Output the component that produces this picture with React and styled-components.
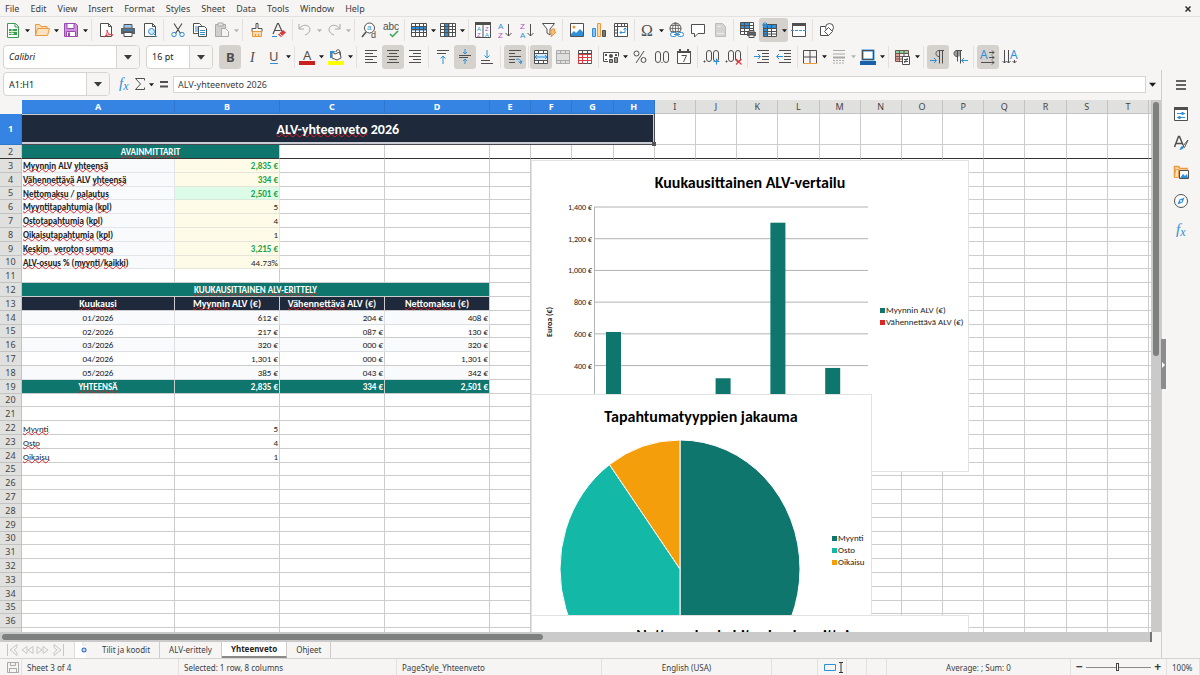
import React, { useState } from 'react';
import styled, { createGlobalStyle, css, ThemeProvider } from 'styled-components';

const theme = {
  bg: '#f6f5f4',
  line: '#d6d3d0',
  grid: '#cccccc',
  header: '#e0e0de',
  accent: '#3584e4',
  pressed: '#d5d1cd',
  text: '#3a3d3f',
  teal: '#0f766e',
  navy: '#1e293b',
  ui: "'Noto Sans', 'Open Sans', sans-serif",
  cell: "Carlito, Lato, 'Open Sans', sans-serif",
};

const GlobalStyle = createGlobalStyle`
  * {
    box-sizing: border-box;
  }
  body {
    margin: 0;
    background: ${theme.bg};
    color: ${theme.text};
    font-family: ${theme.ui};
    font-size: 9px;
  }
  button,
  input {
    font: inherit;
    color: inherit;
  }
  button {
    border: 0;
    padding: 0;
    background: none;
  }
`;

/* ---------- icons ---------- */

const K = '#4f4f4f';
const B = '#2f8fd8';
const O = '#ea9a3e';
const R = '#e0393e';
const G = '#a9a9a9';
const P = '#b04fc4';

const T = ({ x, y, size = 8, fill = K, ...rest }) => (
  <text x={x} y={y} fontSize={size} fill={fill} stroke="none" fontFamily="'Noto Sans', sans-serif" {...rest} />
);

const Letter = props => <T fontFamily="'Liberation Sans', sans-serif" {...props} />;

const Grid = ({ color = K }) => (
  <path d="M.5 1.5h15v13H.5zM.5 4.5h15M.5 7.5h15M.5 10.5h15M4.5 1.5v13M8.5 1.5v13M12.5 1.5v13" stroke={color} fill="none" />
);

const Lines = ({ d, ...rest }) => <path d={d} stroke={K} {...rest} />;

const icons = {
  newDoc: (
    <>
      <path d="M2.5 1.5h8l3 3v11h-11z" fill="#fff" stroke="#3a9c4e" />
      <path d="M10 1.5v3.500h3.500" stroke="#3a9c4e" />
      <path d="M4 7h8v6H4z" fill="#3a9c4e" />
      <path d="M4 9.500h8M4 11.500h5M7 7v6" stroke="#d8f0da" />
    </>
  ),
  open: (
    <>
      <path d="M1.500 13.500v-11h4l1.500 2h6v3" fill="#fbdcae" stroke={O} />
      <path d="M1.500 13.500l2-7h12l-2 7z" fill="#fce3bd" stroke={O} />
    </>
  ),
  save: (
    <>
      <path d="M1.500 1.500h11l2 2v11h-13z" fill="#cf92dc" stroke="#9a4ab0" />
      <path d="M4 1.500h7v5H4zM3.500 9.500h9v5h-9z" fill="#fff" stroke="#9a4ab0" />
      <path d="M5 10.500v3.500h2v-3.500z" fill="#9a4ab0" />
    </>
  ),
  pdf: (
    <>
      <path d="M2.500 1.500h8l3 3v10h-11z" fill="#fff" stroke={K} />
      <path d="M10.500 1.500v3h3" stroke={K} />
      <path d="M6 15c2-1 4-5 3-7 0 3 3 5 6 5-3-1-7 0-9 2z" stroke={R} fill="#fff" />
    </>
  ),
  print: (
    <>
      <path d="M4 2.500h8V6H4z" fill="#fff" stroke={K} />
      <path d="M1 6h14v6H1z" fill="#5c6266" />
      <path d="M4 4h8M3 8h10" stroke={B} />
      <path d="M4 10.500h8v4H4z" fill="#fff" stroke={K} />
    </>
  ),
  preview: (
    <>
      <path d="M2.500 1.500h8l3 3v10h-11z" fill="#fff" stroke={K} />
      <path d="M10.500 1.500v3h3" stroke={K} />
      <circle cx="9.500" cy="9.500" r="3" fill="#d5eafa" stroke={B} />
      <path d="M12 12l3 3" stroke={B} />
    </>
  ),
  cut: (
    <>
      <path d="M4 1.500l6.500 10M12 1.500l-6.500 10" stroke={K} strokeWidth="1.200" />
      <circle cx="4" cy="12.500" r="2.200" stroke={B} />
      <circle cx="12" cy="12.500" r="2.200" stroke={B} />
    </>
  ),
  copy: (
    <>
      <path d="M1.500 1.500h6l2 2v8h-8z" fill="#fff" stroke={K} />
      <path d="M3 5h5M3 7h5M3 9h5" stroke={B} />
      <path d="M6.500 4.500h6l2 2v8h-8z" fill="#fff" stroke={K} />
      <path d="M8 8.500h5M8 10.500h5M8 12.500h5" stroke={B} />
    </>
  ),
  paste: (
    <>
      <path d="M1.500 2.500h10v12h-10z" fill="#cfcfcf" stroke={G} />
      <path d="M4 1h5v3H4z" fill="#e8e8e8" stroke={G} />
      <path d="M7.500 6.500h4l3 3v5h-7z" fill="#f4f4f4" stroke={G} />
    </>
  ),
  clone: (
    <>
      <path d="M7 1.500h2v5h4v3H3v-3h4z" fill="#fff" stroke={K} />
      <path d="M3.500 9.500h9v5h-9z" fill="#fbdcae" stroke={O} />
      <path d="M6.500 12v3M9.500 12v3" stroke={O} />
    </>
  ),
  clear: (
    <>
      <path d="M2 12L6.500 1.500h1L11 9.500M3.500 8.500h6" stroke={K} strokeWidth="1.200" />
      <path d="M1 14.500h5" stroke={B} />
      <path d="M7 12.500l5-4.500 3 2.500-5 4.500z" fill={R} />
      <path d="M8.500 11.500l2.500 2.500" stroke="#fff" />
    </>
  ),
  undo: <path d="M2 2v5h5M2 7c3-5 10-5 11 0 0 3-2 5-5 6" stroke={G} />,
  redo: <path d="M14 2v5H9M14 7C11 2 4 2 3 7c0 3 2 5 5 6" stroke={G} />,
  find: (
    <>
      <circle cx="8.500" cy="6" r="5" fill="#fff" stroke={K} />
      <path d="M5 10l-4 5" stroke={K} strokeWidth="1.500" />
      <Letter x="6" y="8" size="8" fill={B}>a</Letter>
      <Letter x="10" y="16" size="9">d</Letter>
    </>
  ),
  spell: (
    <>
      <Letter x="0" y="8" size="10">abc</Letter>
      <path d="M7 12l2.500 2.500L15 9" stroke="#35a852" strokeWidth="1.500" />
    </>
  ),
  row: (
    <>
      <path d="M1 2h14v12H1z" fill="#fff" />
      <path d="M0 4.500h16v4H0z" fill={B} />
      <Grid />
    </>
  ),
  column: (
    <>
      <path d="M1 2h14v12H1z" fill="#fff" />
      <path d="M4.500 1h5v14h-5z" fill={B} />
      <Grid />
    </>
  ),
  sort: (
    <>
      <path d="M.5.5h15v15H.5z" fill="#fff" stroke={K} />
      <path d="M0 0h16v3H0zM7.500 3h1v13h-1z" fill={K} />
      <Letter x="2" y="8.500" size="6" fill={B}>A</Letter>
      <Letter x="2" y="15" size="6" fill={P}>Z</Letter>
      <Letter x="10" y="8.500" size="6" fill={P}>Z</Letter>
      <Letter x="10" y="15" size="6" fill={B}>A</Letter>
    </>
  ),
  sortAsc: (
    <>
      <Letter x="1" y="7" size="8" fill={B}>A</Letter>
      <Letter x="1" y="16" size="8" fill={P}>Z</Letter>
      <path d="M11.500 2v12M8.500 11l3 3 3-3" stroke={K} />
    </>
  ),
  sortDesc: (
    <>
      <Letter x="1" y="7" size="8" fill={P}>Z</Letter>
      <Letter x="1" y="16" size="8" fill={B}>A</Letter>
      <path d="M11.500 2v12M8.500 11l3 3 3-3" stroke={K} />
    </>
  ),
  filter: (
    <>
      <path d="M1.500 1.500h12l-4.500 5.500v6l-3-2V7z" fill="#fff" stroke={K} />
      <path d="M11 7h3l-1 3h2l-5 5 1-4H9z" fill="#f8c27d" stroke={O} />
    </>
  ),
  image: (
    <>
      <path d="M1.500 1.500h13v13h-13z" fill="#fff" stroke={K} />
      <circle cx="5" cy="5" r="1.500" fill={O} />
      <path d="M2 14v-2l3-3 2 2 4-4 3 3v4z" fill={B} />
    </>
  ),
  chart: (
    <>
      <path d="M1.500 6.500h3v8h-3z" fill="#8fc4ee" stroke={B} />
      <path d="M6.500 1.500h3v13h-3z" fill="#fbdcae" stroke={O} />
      <path d="M11.500 8.500h3v6h-3z" fill="#777" stroke={K} />
    </>
  ),
  pivot: (
    <>
      <path d="M1.500 1.500h13v13h-13z" fill="#fff" stroke={K} />
      <path d="M1.500 4.500h13M4.500 1.500v13M8.500 1.500v3M11.500 1.500v3M1.500 8h3M1.500 11h3" stroke={K} />
      <path d="M12 6v4.500H7M10.500 7.500L12 6l1.500 1.500M8.500 9L7 10.500 8.500 12" stroke={B} />
    </>
  ),
  omega: <T x="2" y="14" size="16" fontFamily="'Liberation Serif', serif">Ω</T>,
  link: (
    <>
      <circle cx="7.500" cy="6.500" r="5.500" stroke={K} />
      <path d="M2 6.500h11M7.500 1v11M3 3.500h9M3 9.500h9M7.500 1c-4 3-4 8 0 11M7.500 1c4 3 4 8 0 11" stroke={K} strokeWidth=".7" />
      <rect x="2.500" y="10.500" width="6" height="4" rx="2" fill="#fff" stroke={B} />
      <rect x="9.500" y="10.500" width="6" height="4" rx="2" fill="#fff" stroke={B} />
      <path d="M6 12.500h6" stroke={B} />
    </>
  ),
  comment: <path d="M1.500 2.500h13v9H8l-3.500 3.500v-3.500h-3z" fill="#fff" stroke={K} />,
  headerFooter: (
    <>
      <path d="M3.500 1.500h7l3 3v10h-10z" fill="#d3d3d3" stroke="#bdbdbd" />
      <path d="M5 11.500h7M5 4.500h4" stroke="#eee" />
    </>
  ),
  printArea: (
    <>
      <path d="M1 1h13v12H1z" fill="#fff" />
      <path d="M1 1h9v6H1z" fill={B} />
      <path d="M.5.5h13v12H.5zM.5 3.500h13M.5 6.500h13M.5 9.500h13M4.500.5v12M9.500.5v12" stroke={K} />
      <path d="M7 10h9v4H7z" fill="#5c6266" />
      <path d="M9 8.500h5V10H9zM9 13h5v2.500H9z" fill="#fff" stroke={K} />
    </>
  ),
  freeze: (
    <>
      <path d="M2 2h13v13H2z" fill="#fff" />
      <path d="M2 2h13v4H2zM2 2h4v13H2z" fill={B} />
      <path d="M1.500 2.500h13v12h-13zM1.500 6.500h13M1.500 9.500h13M1.500 12h13M5.500 2.500v12M9.500 2.500v12" stroke={K} />
      <path d="M3 0v6M0 3h6M1 1l4 4M5 1L1 5" stroke={B} />
    </>
  ),
  split: (
    <>
      <path d="M1.500 1.500h13v13h-13z" fill="#fff" stroke={K} />
      <path d="M1 1h14v3H1z" fill={K} />
      <path d="M0 8.500h16" stroke={B} strokeDasharray="3 1" />
    </>
  ),
  shapes: (
    <>
      <path d="M1.500 4.500h8v9h-8z" fill="#fff" stroke={K} />
      <circle cx="10.500" cy="5.500" r="4" fill="#fff" stroke={K} />
      <path d="M9.500 5.500l4 4-4 4-4-4z" fill="#fff" stroke={K} />
    </>
  ),
  bold: <T x="4" y="13" size="13" fontWeight="700">B</T>,
  italic: <T x="6" y="13" size="14" fontStyle="italic" fontFamily="'Liberation Serif', serif">I</T>,
  underline: (
    <>
      <T x="3" y="12" size="13">U</T>
      <path d="M4 14.500h8" stroke={B} />
    </>
  ),
  fontColor: (
    <>
      <T x="4" y="10.500" size="13">A</T>
      <path d="M0 12h16v4H0z" fill="#c9211e" />
    </>
  ),
  highlight: (
    <>
      <path d="M4 9V3l3 2 5-2 1 6-4 2z" fill="#fff" stroke={K} />
      <path d="M2 2h5l-1 2H4v5H2z" fill={B} />
      <path d="M8 3c0-3 4-3 4 0v3" stroke={K} />
      <path d="M0 12h16v4H0z" fill="#ffff00" />
    </>
  ),
  alignLeft: <Lines d="M2 1.500h12M2 4.500h8M2 7.500h12M2 10.500h8M2 13.500h12" />,
  alignCenter: <Lines d="M2 1.500h12M4 4.500h8M2 7.500h12M4 10.500h8M2 13.500h12" />,
  alignRight: <Lines d="M2 1.500h12M6 4.500h8M2 7.500h12M6 10.500h8M2 13.500h12" />,
  alignTop: (
    <>
      <Lines d="M2 1.500h12M2 4.500h9" />
      <path d="M8 15V7M5.500 9.500L8 7l2.500 2.500" stroke={B} />
    </>
  ),
  alignMiddle: (
    <>
      <Lines d="M2 6.500h12M2 8.500h9" />
      <path d="M8 0v5M6 3l2 2 2-2M8 15v-5M6 12l2-2 2 2" stroke={B} />
    </>
  ),
  alignBottom: (
    <>
      <Lines d="M2 11.500h9M2 14.500h12" />
      <path d="M8 1v8M5.500 6.500L8 9l2.500-2.500" stroke={B} />
    </>
  ),
  wrap: (
    <>
      <Lines d="M2 1.500h12M2 4.500h6M2 7.500h12M2 10.500h6M2 13.500h6" />
      <path d="M9 10.500c3-1 5 0 5 4M11.500 12.500l2.500 2 1-3" stroke={B} />
    </>
  ),
  merge: (
    <>
      <path d="M1.500 1.500h13v13h-13z" fill="#fff" stroke={K} />
      <path d="M1.500 4.500h13M1.500 11.500h13M5.500 1.500v3M10.500 1.500v3M5.500 11.500v3M10.500 11.500v3" stroke={K} />
      <path d="M2 5h12v6H2z" fill="#d5eafa" />
      <path d="M2 8h12M4 6L2 8l2 2M12 6l2 2-2 2" stroke={B} />
    </>
  ),
  mergeOff: (
    <>
      <path d="M1.500 1.500h13v13h-13z" fill="#dedede" stroke={G} />
      <path d="M1.500 4.500h13M1.500 11.500h13M5.500 1.500v3M10.500 1.500v3M5.500 11.500v3M10.500 11.500v3" stroke={G} />
    </>
  ),
  unmerge: (
    <>
      <path d="M1.500 1.500h13v13h-13z" fill="#fff" stroke={K} />
      <path d="M5.500 1.500v3M10.500 1.500v3M1.500 4.500h13" stroke={K} />
      <path d="M1.500 5.500h13M1.500 11.500h13M5.500 5v10M10.500 5v10M1.500 8.500h13M1.500 5v10M14.500 5v10" stroke={R} />
    </>
  ),
  currency: (
    <>
      <path d="M5 12.500H.5v-9h15v4" fill="#fff" stroke={K} />
      <path d="M2 5h2v2H2zM12 5h2v2h-2zM2 10h2v1H2z" fill={K} />
      <circle cx="8" cy="7" r="2" fill={K} />
      <path d="M6.500 10.500h3v3h-3zM11.500 8.500h3v5h-3z" fill="#999" stroke={K} />
    </>
  ),
  percent: (
    <>
      <circle cx="4.500" cy="4.500" r="2.500" stroke={K} />
      <circle cx="11.500" cy="11" r="2.500" stroke={K} />
      <path d="M12 2L4 14" stroke={K} />
    </>
  ),
  decimals: (
    <>
      <rect x="1.500" y="2.500" width="5" height="11" rx="2.500" stroke={K} />
      <rect x="9.500" y="2.500" width="5" height="11" rx="2.500" stroke={K} />
      <path d="M7.500 13h1v1h-1z" fill={K} />
    </>
  ),
  date: (
    <>
      <path d="M1.500 2.500h13v12h-13z" fill="#fff" stroke={K} />
      <path d="M1 2h14v2H1zM3 0h2v3H3zM11 0h2v3h-2z" fill={K} />
      <path d="M5.500 6.500h5l-3 6.500" stroke={K} />
    </>
  ),
  addDecimal: (
    <>
      <rect x="2.500" y="1.500" width="5" height="11" rx="2.500" stroke={K} />
      <rect x="9.500" y="1.500" width="5" height="11" rx="2.500" stroke={K} />
      <path d="M0 12h1v1H0z" fill={K} stroke={K} />
      <path d="M12.500 9.500v6M9.500 12.500h6" stroke={B} strokeWidth="1.200" />
    </>
  ),
  removeDecimal: (
    <>
      <rect x="2.500" y="1.500" width="5" height="11" rx="2.500" stroke={K} />
      <rect x="9.500" y="1.500" width="5" height="11" rx="2.500" stroke={K} />
      <path d="M0 12h1v1H0z" fill={K} stroke={K} />
      <path d="M10 10l5.500 5.500M15.500 10L10 15.500" stroke={R} strokeWidth="1.200" />
    </>
  ),
  indent: (
    <>
      <Lines d="M3 1.500h12M8 4.500h7M8 7.500h7M8 10.500h7M3 13.500h12" />
      <path d="M0 7.500h6M4 5l2.500 2.500L4 10" stroke={B} />
    </>
  ),
  outdent: (
    <>
      <Lines d="M3 1.500h12M8 4.500h7M8 7.500h7M8 10.500h7M3 13.500h12" />
      <path d="M1 7.500h6M3 5L.5 7.500 3 10" stroke={B} />
    </>
  ),
  borders: (
    <>
      <path d="M14.500 14.500v-13h-13v13M1.500 8h13M8 1.500v13" stroke={K} />
      <path d="M1 14.500h14" stroke={O} />
    </>
  ),
  borderStyle: (
    <>
      <path d="M2 1.500h12M2 5h12" stroke={G} />
      <path d="M2 8.500h12" stroke={G} strokeWidth="2" />
      <path d="M2 11.500h12M2 14h12" stroke={G} strokeDasharray="2 1" />
    </>
  ),
  borderColor: (
    <>
      <path d="M2.500 1.500h11v9h-11z" fill="#fff" stroke={B} strokeWidth="2" />
      <path d="M2.500 1.500h11v9h-11z" stroke={K} />
      <path d="M0 12h16v4H0z" fill="#1b5fa8" />
    </>
  ),
  conditional: (
    <>
      <path d="M1 1h12v3H1z" fill="#8fd19e" />
      <path d="M1 4h4v9H1z" fill="#f09a9a" />
      <path d="M.5 1.500h13v11H.5zM.5 4.500h13M.5 7.500h13M.5 10h13M4.500 1.500v11M9 1.500v11" stroke="#6b5a50" />
      <path d="M7.500 7.500h7v8h-7z" fill="#fff" stroke={K} />
      <path d="M9 10.500h4M9 12.500h4M12.500 9l-3 5" stroke={K} />
    </>
  ),
  ltr: (
    <>
      <path d="M14 1.500H9c-4 0-4 6 0 6M9.500 1.500v13M12.500 1.500v13" stroke={K} />
      <path d="M0 11.500h6M4 9l2.500 2.500L4 14" stroke={B} />
    </>
  ),
  rtl: (
    <>
      <path d="M8 1.500H5c-4 0-4 6 0 6h3z" fill="#999" />
      <path d="M10 1.500H5c-4 0-4 6 0 6M5.500 1.500v11M8.500 1.500v13" stroke={K} />
      <path d="M10 11.500h6M12 9l-2.500 2.500L12 14" stroke={B} />
    </>
  ),
  textHorizontal: (
    <>
      <T x="0" y="10" size="12" fill={B}>A</T>
      <path d="M9 3.500h5M9 8.500h5M1 13.500h13M12 1.500l2 2-2 2M12 6.500l2 2-2 2M12 11.500l2 2-2 2" stroke={K} />
    </>
  ),
  textVertical: (
    <>
      <T x="8" y="10" size="12" fill={B}>A</T>
      <path d="M2.500 1v13M6.500 1v13M12.500 11v3M.5 12l2 2 2-2M4.500 12l2 2 2-2M10.500 12l2 2 2-2" stroke={K} />
    </>
  ),
  fx: (
    <T x="3" y="12" size="15" fill={B} fontStyle="italic" fontFamily="'Liberation Serif', serif">
      f<tspan fontSize="12" dy="2">x</tspan>
    </T>
  ),
  sum: <path d="M12.500 4.500v-2h-9L8.500 8l-5 5.500h9v-2" stroke={K} />,
  equals: <path d="M5 6h8M5 10.500h8" stroke={K} strokeWidth="2" />,
  menu: <path d="M3 4h10M3 8h10M3 12h10" stroke="#333" strokeWidth="1.500" />,
  properties: (
    <>
      <path d="M1.500 1.500h13v13h-13z" fill="#fff" stroke={K} />
      <path d="M1 1h14v3H1z" fill={K} />
      <path d="M4 7.500h8M4 11.500h8" stroke={B} />
      <path d="M9.500 6v3M6.500 10v3" stroke={B} strokeWidth="2" />
    </>
  ),
  styles: (
    <>
      <path d="M1.500 12L5.500 1.500h1L10 10M3 8.500h6" stroke={K} strokeWidth="1.500" />
      <path d="M15 5l-5 6 1.500 1.500z" fill="#fff" stroke={K} />
      <path d="M5 15c3 0 2-4 4.500-4 2.500 0 2 4-4.500 4z" fill={B} />
    </>
  ),
  gallery: (
    <>
      <path d="M1.500 13.500v-11h4l1.500 2h7v2" fill="#fbdcae" stroke={O} strokeWidth="1.500" />
      <path d="M1.500 13.500l1-8h3v8z" fill="#fce3bd" stroke={O} />
      <path d="M6.500 6.500h9v8h-9z" fill="#fff" stroke={K} />
      <path d="M7 14l3-4 2 2 2-2 1 4z" fill={B} />
    </>
  ),
  navigator: (
    <>
      <circle cx="8" cy="8" r="6.500" fill="#fff" stroke={K} />
      <path d="M11.500 4.500l-2 5-5 2 2-5z" fill={B} />
      <circle cx="8" cy="8" r="1" fill="#fff" />
    </>
  ),
  saved: (
    <path d="M2.500 3.500h11v10h-11zM5.500 3.500v3h5v-3M4.500 13.500v-4h7v4" stroke={G} />
  ),
  addSheet: (
    <>
      <path d="M1 0h9l3 3v13H1z" fill="#fff" />
      <path d="M1.500 0v16M10 0v3h3" stroke="#ddd" />
      <circle cx="11" cy="8" r="2.500" fill="#2a6fc0" />
      <path d="M11 6.500v3M9.500 8h3" stroke="#fff" />
    </>
  ),
};

const IconSvg = styled.svg`
  flex: none;
  overflow: visible;
`;

const Icon = ({ name }) => (
  <IconSvg width="16" height="16" viewBox="0 0 16 16" fill="none" aria-hidden="true">
    {icons[name]}
  </IconSvg>
);

const Triangle = ({ size = 6 }) => (
  <svg width={size} height={size} viewBox="0 0 6 6" aria-hidden="true">
    <path d="M0 1.500h6L3 5z" fill="currentColor" />
  </svg>
);

/* ---------- window chrome ---------- */

const Window = styled.div`
  display: flex;
  flex-direction: column;
  height: 100vh;
  overflow: hidden;
`;

const MenuBar = styled.nav`
  display: flex;
  align-items: center;
  gap: 1px;
  height: 17px;
  padding-right: 6px;
  border-bottom: 1px solid #e4e2e0;
`;

const MenuItem = styled.button`
  padding: 1px 5px 0;
  line-height: 15px;
`;

const CloseButton = styled.button`
  margin-left: auto;
  width: 12px;
  height: 12px;
  color: #2c2c2c;
`;

const Toolbar = styled.div`
  display: flex;
  align-items: center;
  height: ${({ $height }) => $height}px;
  padding-left: ${({ $inset }) => $inset}px;
`;

const ToolGroup = styled.div`
  display: flex;
  border-radius: 3px;
  ${({ $pressed, theme }) =>
    $pressed &&
    css`
      background: ${theme.pressed};
    `}
`;

const ToolButton = styled.button`
  display: flex;
  align-items: center;
  justify-content: center;
  width: 22px;
  height: 24px;
`;

const ArrowButton = styled.button`
  display: flex;
  align-items: center;
  justify-content: center;
  width: 7px;
  height: 24px;
  color: ${({ disabled }) => (disabled ? '#b4b4b4' : '#1d1d1d')};
`;

const Separator = styled.span`
  width: 1px;
  height: 22px;
  margin: 0 ${({ $tight }) => ($tight ? 1 : 3)}px 0 2px;
  background: #e3e0de;
`;

const Combo = styled.div`
  display: flex;
  flex: none;
  width: ${({ $width }) => $width}px;
  height: 24px;
  margin-right: 6px;
  border: 1px solid ${({ theme }) => theme.line};
  border-radius: 4px;
  background: #fff;
  overflow: hidden;
`;

const ComboInput = styled.input`
  flex: 1;
  min-width: 0;
  padding: 0 5px;
  border: 0;
  background: none;
  font-size: 9px;
  font-style: ${({ $italic }) => ($italic ? 'italic' : 'normal')};
  color: #222;
`;

const ComboArrow = styled.button`
  display: flex;
  align-items: center;
  justify-content: center;
  width: 23px;
  border-left: 1px solid ${({ theme }) => theme.line};
  background: ${({ theme }) => theme.bg};
`;

const Main = styled.div`
  display: flex;
  flex: 1;
  min-height: 0;
`;

const Workspace = styled.main`
  display: flex;
  flex-direction: column;
  flex: 1;
  min-width: 0;
`;

const FormulaBar = styled.div`
  display: flex;
  align-items: center;
  height: 30px;
  padding: 0 5px 2px 3px;
`;

const FormulaButton = styled.button`
  display: flex;
  width: 16px;
  height: 16px;
`;

const FormulaInput = styled.input`
  flex: 1;
  min-width: 0;
  height: 17px;
  margin: 0 3px 0 2px;
  padding: 0 4px;
  border: 1px solid ${({ theme }) => theme.line};
  background: #fff;
  font-size: 9px;
`;

const SideBar = styled.aside`
  position: relative;
  display: flex;
  flex-direction: column;
  align-items: center;
  gap: 5px;
  width: 39px;
  padding-top: 3px;
  border-left: 1px solid #cfccca;
`;

const SideHandle = styled.button`
  position: absolute;
  left: -1px;
  top: 269px;
  width: 5px;
  height: 50px;
  background: #8c8c8c;
  color: #fff;
`;

/* ---------- sheet ---------- */

const SheetArea = styled.div`
  display: flex;
  flex: 1;
  min-height: 0;
`;

const Canvas = styled.div`
  position: relative;
  flex: 1;
  min-width: 0;
  overflow: hidden;
  background: #fff;
`;

const SheetTable = styled.table`
  width: 100%;
  table-layout: fixed;
  border-collapse: separate;
  border-spacing: 0;
  font-family: ${({ theme }) => theme.cell};
  font-size: 9px;
  line-height: 11px;
  color: #222;
`;

const HeadCell = styled.th`
  padding: 0;
  overflow: hidden;
  border: solid #c3c3c1;
  border-width: 0 1px 1px 0;
  background: ${({ theme, $selected }) => ($selected ? theme.accent : theme.header)};
  color: ${({ $selected }) => ($selected ? '#fff' : '#444')};
  font: ${({ $selected }) => ($selected ? 700 : 400)} 9px/12px ${({ theme }) => theme.ui};
  ${({ $selected }) =>
    $selected &&
    css`
      border-color: #2f77cd;
    `}
`;

const Corner = styled.td`
  padding: 0;
  background: ${({ theme }) => theme.bg};
`;

const Row = styled.tr`
  height: ${({ $height }) => $height}px;
  ${({ $frozen }) =>
    $frozen &&
    css`
      && > * {
        border-bottom-color: #333;
      }
    `}
`;

const kinds = {
  label: css`
    background: #f8fafc;
    border-color: #e2e5e9;
    font-weight: 700;
  `,
  input: css`
    background: #fefce8;
    border-color: #e5e5da;
  `,
  money: css`
    background: #fefce8;
    border-color: #e5e5da;
    color: #16a34a;
    font-weight: 700;
  `,
  result: css`
    background: #dcfce7;
    border-color: #d5ebdd;
    color: #16a34a;
    font-weight: 700;
  `,
  section: css`
    background: ${theme.teal};
    color: #fff;
    font-weight: 700;
  `,
  heading: css`
    background: ${theme.navy};
    color: #fff;
    font-weight: 700;
    font-size: 10px;
  `,
  tinted: css`
    background: #f8fafc;
    border-color: #dcdfe3;
  `,
  title: css`
    position: relative;
    background: ${theme.navy};
    border-color: #4a4a52;
    box-shadow: inset -1px -2px #c9ccd2, inset 0 1px #c9ccd2;
    color: #fff;
    font-size: 14px;
    font-weight: 700;
  `,
};

const Cell = styled.td`
  padding: 0 1px;
  border: solid ${({ theme }) => theme.grid};
  border-width: 0 1px 1px 0;
  text-align: ${({ $align }) => $align || 'left'};
  vertical-align: ${({ $low }) => ($low ? 'bottom' : 'middle')};
  white-space: nowrap;
  ${({ $kind }) => kinds[$kind]}
`;

const Misspelled = styled.span`
  text-decoration: underline wavy #e02020 1px;
  text-underline-offset: -1px;
  text-decoration-skip-ink: none;
`;

const FillHandle = styled.span`
  position: absolute;
  right: -2px;
  bottom: -2px;
  width: 4px;
  height: 4px;
  background: #555;
`;

const VerticalBar = styled.div`
  width: 9px;
  padding: 2px 2px 0 1px;
  background: #cacaca;
`;

const HorizontalBar = styled.div`
  height: 10px;
  margin-right: 9px;
  padding: 2px;
  border-right: 2px solid #777;
  background: #cacaca;
`;

const Thumb = styled.div`
  width: ${({ $vertical }) => ($vertical ? '6px' : '47.2%')};
  height: ${({ $vertical }) => ($vertical ? '48%' : '6px')};
  border-radius: 3px;
  background: #7e807f;
`;

const ChartPanel = styled.svg`
  position: absolute;
  left: 531px;
  top: ${({ $top }) => $top}px;
  border: 1px solid #e2e2e2;
  background: #fff;
  font-family: ${({ theme }) => theme.cell};
  font-size: 8px;
  fill: #222;
`;

const LegendText = styled.text`
  font-size: 9px;
`;

const ChartTitle = styled.text`
  font-size: 16px;
  font-weight: 700;
  fill: #000;
  text-anchor: middle;
`;

/* ---------- bottom bars ---------- */

const TabBar = styled.div`
  display: flex;
  align-items: center;
  height: 16px;
  padding-left: 5px;
`;

const TabNav = styled.button`
  display: flex;
  width: 15px;
`;

const AddSheet = styled.button`
  display: flex;
  margin: 0 4px 0 8px;
`;

const SheetTab = styled.button`
  height: 16px;
  padding: 0 9px;
  border-right: 1px solid #cfccca;
  font-size: 8px;
  line-height: 14px;
  ${({ $active }) =>
    $active &&
    css`
      background: #fff;
      border-bottom: 2px solid #8a8a8a;
      font-weight: 700;
      color: #222;
    `}
`;

const StatusBar = styled.footer`
  display: grid;
  grid-template-columns: 22px 157fr 218fr 205fr 170fr 46fr 29px 20px 20px 184fr 96px 33px;
  height: 17px;
  border-top: 1px solid ${({ theme }) => theme.line};
  font-size: 8px;
`;

const StatusField = styled.div`
  display: flex;
  align-items: center;
  justify-content: ${({ $center }) => ($center ? 'center' : 'flex-start')};
  padding: 0 5px;
  border-right: 1px solid #e3e0de;
  white-space: nowrap;
`;

const ZoomSlider = styled.input`
  appearance: none;
  flex: 1;
  min-width: 0;
  height: 10px;
  margin: 0 3px;
  background: linear-gradient(#8a8a8a, #8a8a8a) center / 100% 1px no-repeat;
  &::-webkit-slider-thumb {
    appearance: none;
    width: 3px;
    height: 8px;
    border: 1px solid #444;
    background: #fff;
  }
`;

const ZoomButton = styled.button`
  font-size: 12px;
  font-weight: 700;
  line-height: 12px;
`;

/* ---------- data ---------- */

const menus = ['File', 'Edit', 'View', 'Insert', 'Format', 'Styles', 'Sheet', 'Data', 'Tools', 'Window', 'Help'];

// "|" is a separator, "¦" a narrow one
const standardTools = [
  ['newDoc', 'New', 'arrow'], ['open', 'Open', 'arrow'], ['save', 'Save', 'arrow'], '|',
  ['pdf', 'Export as PDF'], ['print', 'Print'], ['preview', 'Print preview'], '|',
  ['cut', 'Cut'], ['copy', 'Copy'], ['paste', 'Paste', 'arrow disabled'], '|',
  ['clone', 'Clone formatting'], ['clear', 'Clear formatting'], '¦',
  ['undo', 'Undo', 'arrow disabled'], ['redo', 'Redo', 'arrow disabled'], '|',
  ['find', 'Find and replace'], ['spell', 'Spelling'], '|',
  ['row', 'Row', 'arrow'], ['column', 'Column', 'arrow'], '|',
  ['sort', 'Sort'], ['sortAsc', 'Sort ascending'], ['sortDesc', 'Sort descending'], ['filter', 'AutoFilter'], '|',
  ['image', 'Insert image'], ['chart', 'Insert chart'], ['pivot', 'Pivot table'], '¦',
  ['omega', 'Special character', 'arrow'], ['link', 'Hyperlink'], ['comment', 'Comment'],
  ['headerFooter', 'Headers and footers', 'disabled'], '|',
  ['printArea', 'Print area'], ['freeze', 'Freeze rows and columns', 'arrow pressed'], ['split', 'Split window'], '|',
  ['shapes', 'Draw functions'],
];

const formatTools = [
  ['bold', 'Bold', 'pressed'], ['italic', 'Italic'], ['underline', 'Underline', 'arrow'], '¦',
  ['fontColor', 'Font color', 'arrow'], ['highlight', 'Background color', 'arrow'], '|',
  ['alignLeft', 'Align left'], ['alignCenter', 'Center', 'pressed'], ['alignRight', 'Align right'], '|',
  ['alignTop', 'Align top'], ['alignMiddle', 'Center vertically', 'pressed'], ['alignBottom', 'Align bottom'], '|',
  ['wrap', 'Wrap text', 'pressed'], '¦',
  ['merge', 'Merge and center', 'pressed'], ['mergeOff', 'Merge cells', 'disabled'], ['unmerge', 'Unmerge cells'], '¦',
  ['currency', 'Currency', 'arrow'], ['percent', 'Percent'], ['decimals', 'Number'], ['date', 'Date'], '|',
  ['addDecimal', 'Add decimal place'], ['removeDecimal', 'Delete decimal place'], '|',
  ['indent', 'Increase indent'], ['outdent', 'Decrease indent'], '¦',
  ['borders', 'Borders', 'arrow'], ['borderStyle', 'Border style', 'arrow disabled'],
  ['borderColor', 'Border color', 'arrow'], '|',
  ['conditional', 'Conditional', 'arrow'], '|',
  ['ltr', 'Left-to-right', 'pressed'], ['rtl', 'Right-to-left'], '|',
  ['textHorizontal', 'Horizontal text', 'pressed'], ['textVertical', 'Vertical text'],
];

const sideTools = [
  ['menu', 'Sidebar settings'], ['properties', 'Properties'], ['styles', 'Styles'],
  ['gallery', 'Gallery'], ['navigator', 'Navigator'], ['fx', 'Functions'],
];

const columns = 'ABCDEFGHIJKLMNOPQRST'.split('');

const metric = (label, value, kind) => [
  { text: label, kind: 'label' },
  { text: value, kind, align: 'right' },
];

const month = (name, sales, deductible, net, kind) => [
  { text: name, kind, align: 'center' },
  ...[sales, deductible, net].map(text => ({ text, kind, align: 'right' })),
];

const rows = {
  1: [{ text: 'ALV-yhteenveto 2026', kind: 'title', align: 'center', span: 8 }],
  2: [{ text: 'AVAINMITTARIT', kind: 'section', align: 'center', span: 2 }],
  3: metric('Myynnin ALV yhteensä', '2,835 €', 'money'),
  4: metric('Vähennettävä ALV yhteensä', '334 €', 'money'),
  5: metric('Nettomaksu / palautus', '2,501 €', 'result'),
  6: metric('Myyntitapahtumia (kpl)', '5', 'input'),
  7: metric('Ostotapahtumia (kpl)', '4', 'input'),
  8: metric('Oikaisutapahtumia (kpl)', '1', 'input'),
  9: metric('Keskim. veroton summa', '3,215 €', 'money'),
  10: metric('ALV-osuus % (myynti/kaikki)', '44.73%', 'input'),
  12: [{ text: 'KUUKAUSITTAINEN ALV-ERITTELY', kind: 'section', align: 'center', span: 4 }],
  13: ['Kuukausi', 'Myynnin ALV (€)', 'Vähennettävä ALV (€)', 'Nettomaksu (€)'].map(text => ({
    text,
    kind: 'heading',
    align: 'center',
  })),
  14: month('01/2026', '612 €', '204 €', '408 €', 'tinted'),
  15: month('02/2026', '217 €', '087 €', '130 €'),
  16: month('03/2026', '320 €', '000 €', '320 €', 'tinted'),
  17: month('04/2026', '1,301 €', '000 €', '1,301 €'),
  18: month('05/2026', '385 €', '043 €', '342 €', 'tinted'),
  19: month('YHTEENSÄ', '2,835 €', '334 €', '2,501 €', 'section'),
  22: [{ text: 'Myynti', low: true }, { text: '5', align: 'right', low: true }],
  23: [{ text: 'Osto', low: true }, { text: '4', align: 'right', low: true }],
  24: [{ text: 'Oikaisu', low: true }, { text: '1', align: 'right', low: true }],
};

const sales = [612, 217, 320, 1301, 385];

const rowHeight = n => {
  if (n === 1) return 31;
  return n > 2 && n % 5 === 0 ? 13 : 14;
};

const spell = text =>
  text.split(/([A-Za-zÄäÖö][A-Za-zÄäÖö-]+)/).map((part, i) =>
    i % 2 && part !== 'ALV' ? <Misspelled key={i}>{part}</Misspelled> : part
  );

/* ---------- parts ---------- */

const Tools = ({ items }) =>
  items.map((item, i) => {
    if (typeof item === 'string') return <Separator key={i} $tight={item === '¦'} />;
    const [name, label, flags = ''] = item;
    const disabled = flags.includes('disabled');
    return (
      <ToolGroup key={name} $pressed={flags.includes('pressed')}>
        <ToolButton aria-label={label} disabled={disabled}>
          <Icon name={name} />
        </ToolButton>
        {flags.includes('arrow') && (
          <ArrowButton aria-label={`${label} options`} disabled={disabled}>
            <Triangle size={5} />
          </ArrowButton>
        )}
      </ToolGroup>
    );
  });

const ComboBox = ({ label, value, width, italic }) => (
  <Combo $width={width}>
    <ComboInput aria-label={label} defaultValue={value} $italic={italic} />
    <ComboArrow aria-label={`${label} list`}>
      <Triangle size={8} />
    </ComboArrow>
  </Combo>
);

const Sheet = () => (
  <SheetTable>
    <colgroup>
      <col width="22" />
      <col width="153" />
      <col width="105" />
      <col width="105" />
      <col width="105" />
      {columns.slice(4).map(c => (
        <col key={c} />
      ))}
      <col width="3" />
    </colgroup>
    <thead>
      <Row $height={14}>
        <Corner />
        {columns.map((c, i) => (
          <HeadCell key={c} scope="col" $selected={i < 8}>
            {c}
          </HeadCell>
        ))}
        <HeadCell as="td" />
      </Row>
    </thead>
    <tbody>
      {Array.from({ length: 37 }, (_, i) => i + 1).map(n => {
        const cells = rows[n] || [];
        const used = cells.reduce((sum, c) => sum + (c.span || 1), 0);
        return (
          <Row key={n} $height={rowHeight(n)} $frozen={n === 2}>
            <HeadCell scope="row" $selected={n === 1}>
              {n < 37 && n}
            </HeadCell>
            {cells.map((c, i) => (
              <Cell key={i} colSpan={c.span} $kind={c.kind} $align={c.align} $low={c.low}>
                {spell(c.text)}
                {c.kind === 'title' && <FillHandle />}
              </Cell>
            ))}
            {columns.slice(used).map(c => (
              <Cell key={c} />
            ))}
            <Cell />
          </Row>
        );
      })}
    </tbody>
  </SheetTable>
);

const BarChart = () => {
  const y = value => 268 - (value * 222) / 1400;
  return (
    <ChartPanel $top={60} width="438" height="312">
      <ChartTitle x="218" y="27">
        Kuukausittainen ALV-vertailu
      </ChartTitle>
      {[200, 400, 600, 800, 1000, 1200, 1400].map(v => (
        <React.Fragment key={v}>
          <path d={`M62 ${y(v)}H336`} stroke="#b3b3b3" />
          <text x="60" y={y(v) + 3} textAnchor="end">
            {v.toLocaleString('en-US')} €
          </text>
        </React.Fragment>
      ))}
      <path d={`M62.500 ${y(1400)}V268`} stroke="#b3b3b3" />
      {sales.map((v, i) => (
        <rect key={i} x={74 + i * 54.8} y={y(v)} width="15" height={268 - y(v)} fill={theme.teal} />
      ))}
      <text transform="translate(20 161) rotate(-90)" textAnchor="middle" fontWeight="700">
        Euroa (€)
      </text>
      <rect x="348" y="147" width="5" height="5" fill={theme.teal} />
      <LegendText x="354" y="152">
        Myynnin ALV (€)
      </LegendText>
      <rect x="348" y="159" width="5" height="5" fill="#dc2626" />
      <LegendText x="354" y="164">
        Vähennettävä ALV (€)
      </LegendText>
    </ChartPanel>
  );
};

const PieChart = () => (
  <ChartPanel $top={294} width="341" height="222">
    <ChartTitle x="169" y="27">
      Tapahtumatyyppien jakauma
    </ChartTitle>
    <g stroke="#fff">
      <path d="M148 174V45a120 129 0 0 1 0 258z" fill={theme.teal} />
      <path d="M148 174v129A120 129 0 0 1 77.500 69.600z" fill="#14b8a6" />
      <path d="M148 174L77.500 69.600A120 129 0 0 1 148 45z" fill="#f59e0b" />
    </g>
    {[
      ['Myynti', theme.teal],
      ['Osto', '#14b8a6'],
      ['Oikaisu', '#f59e0b'],
    ].map(([name, color], i) => (
      <React.Fragment key={name}>
        <rect x="300" y={141 + i * 12} width="5" height="5" fill={color} />
        <LegendText x="306" y={146 + i * 12}>
          {name}
        </LegendText>
      </React.Fragment>
    ))}
  </ChartPanel>
);

const TrendChart = () => (
  <ChartPanel $top={515} width="438" height="222">
    <ChartTitle x="215" y="25">
      Nettomaksukehitys kuukausittain
    </ChartTitle>
  </ChartPanel>
);

const navPaths = {
  'First sheet': 'M2.500 2v12M12 2.500L5 8l7 5.500v-3L9 8l3-2.500z',
  'Previous sheet': 'M7 4.500L2 8l5 3.500zM13 4.500L8 8l5 3.500z',
  'Next sheet': 'M2 4.500l5 3.500-5 3.500zM8 4.500L13 8l-5 3.500z',
  'Last sheet': 'M13.500 2v12M4 2.500L11 8l-7 5.500v-3L7 8 4 5.500z',
};

const App = () => {
  const [tab, setTab] = useState('Yhteenveto');

  return (
    <ThemeProvider theme={theme}>
      <GlobalStyle />
      <Window>
        <MenuBar>
          {menus.map(m => (
            <MenuItem key={m}>{m}</MenuItem>
          ))}
          <CloseButton aria-label="Close document">
            <svg width="6" height="6" viewBox="0 0 6 6">
              <path d="M.5.5l5 5M5.500.5l-5 5" stroke="currentColor" strokeWidth="1.500" />
            </svg>
          </CloseButton>
        </MenuBar>
        <Toolbar $inset={2} $height={26}>
          <Tools items={standardTools} />
        </Toolbar>
        <Toolbar $inset={3} $height={27}>
          <ComboBox label="Font name" value="Calibri" width={137} italic />
          <ComboBox label="Font size" value="16 pt" width={67} />
          <Tools items={formatTools} />
        </Toolbar>
        <Main>
          <Workspace>
            <FormulaBar>
              <ComboBox label="Name box" value="A1:H1" width={107} />
              <FormulaButton aria-label="Function wizard">
                <Icon name="fx" />
              </FormulaButton>
              <FormulaButton aria-label="Select function">
                <Icon name="sum" />
              </FormulaButton>
              <ArrowButton aria-label="Function options">
                <Triangle size={5} />
              </ArrowButton>
              <FormulaButton aria-label="Formula">
                <Icon name="equals" />
              </FormulaButton>
              <FormulaInput aria-label="Input line" defaultValue="ALV-yhteenveto 2026" />
              <ArrowButton aria-label="Expand formula bar">
                <Triangle size={7} />
              </ArrowButton>
            </FormulaBar>
            <SheetArea>
              <Canvas>
                <Sheet />
                <BarChart />
                <PieChart />
                <TrendChart />
              </Canvas>
              <VerticalBar>
                <Thumb $vertical />
              </VerticalBar>
            </SheetArea>
            <HorizontalBar>
              <Thumb />
            </HorizontalBar>
            <TabBar role="tablist">
              {Object.entries(navPaths).map(([label, d]) => (
                <TabNav key={label} aria-label={label}>
                  <svg width="15" height="16" fill="none" stroke="#c6c6c6">
                    <path d={d} />
                  </svg>
                </TabNav>
              ))}
              <AddSheet aria-label="Add sheet">
                <Icon name="addSheet" />
              </AddSheet>
              {['Tilit ja koodit', 'ALV-erittely', 'Yhteenveto', 'Ohjeet'].map(name => (
                <SheetTab
                  key={name}
                  role="tab"
                  aria-selected={tab === name}
                  $active={tab === name}
                  onClick={() => setTab(name)}
                >
                  {name}
                </SheetTab>
              ))}
            </TabBar>
          </Workspace>
          <SideBar>
            {sideTools.map(([name, label]) => (
              <ToolButton key={name} aria-label={label}>
                <Icon name={name} />
              </ToolButton>
            ))}
            <SideHandle aria-label="Hide sidebar">
              <svg width="5" height="6">
                <path d="M1 0l3 3-3 3z" fill="currentColor" />
              </svg>
            </SideHandle>
          </SideBar>
        </Main>
        <StatusBar>
          <StatusField>
            <Icon name="saved" />
          </StatusField>
          <StatusField>Sheet 3 of 4</StatusField>
          <StatusField>Selected: 1 row, 8 columns</StatusField>
          <StatusField>PageStyle_Yhteenveto</StatusField>
          <StatusField $center>English (USA)</StatusField>
          <StatusField />
          <StatusField>
            <IconSvg width="22" height="12" fill="none">
              <path d="M1.500 3.500h11v6h-11z" stroke={B} />
              <path d="M16 1.500h4M16 11.500h4M18 1.500v10" stroke="#333" />
            </IconSvg>
          </StatusField>
          <StatusField />
          <StatusField />
          <StatusField $center>Average: ; Sum: 0</StatusField>
          <StatusField>
            <ZoomButton aria-label="Zoom out">−</ZoomButton>
            <ZoomSlider type="range" aria-label="Zoom" min="0" max="200" defaultValue="97" />
            <ZoomButton aria-label="Zoom in">+</ZoomButton>
          </StatusField>
          <StatusField>100%</StatusField>
        </StatusBar>
      </Window>
    </ThemeProvider>
  );
};

export default App;
